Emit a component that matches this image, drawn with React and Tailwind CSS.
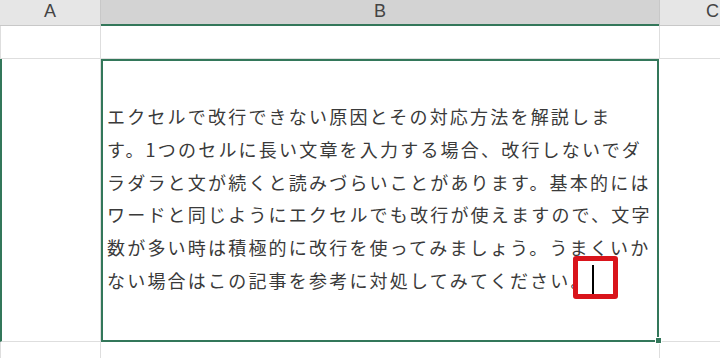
export default function App() {
  const lines = [
    "エクセルで改行できない原因とその対応方法を解説しま",
    "す。1つのセルに長い文章を入力する場合、改行しないでダ",
    "ラダラと文が続くと読みづらいことがあります。基本的には",
    "ワードと同じようにエクセルでも改行が使えますので、文字",
    "数が多い時は積極的に改行を使ってみましょう。うまくいか",
  ]
  const last = "ない場合はこの記事を参考に対処してみてください。"

  return (
    <div className="w-[720px] h-[358px] overflow-hidden bg-white flex flex-col font-['Noto_Sans_CJK_JP',sans-serif]">
      {/* Column headers */}
      <div className="flex h-[26px] shrink-0 font-['Liberation_Sans',sans-serif] text-[18px] text-[#444]">
        <div className="w-[101px] shrink-0 bg-[#e6e6e6] border-r border-b border-[#c8c8c8] flex items-center justify-center pb-[3px]">A</div>
        <div className="w-[558px] shrink-0 bg-[#d3d3d3] border-b-2 border-[#33775a] flex items-center justify-center pb-[2px]">B</div>
        <div className="w-[106px] shrink-0 bg-[#e6e6e6] border-l border-b border-[#c8c8c8] flex items-center justify-center pb-[3px]">C</div>
      </div>

      {/* Row 1 */}
      <div className="flex h-[33px] shrink-0">
        <div className="w-[101px] shrink-0 border-l border-r border-b border-[#dedede]" />
        <div className="w-[558px] shrink-0 border-b border-[#dedede]" />
        <div className="w-[106px] shrink-0 border-l border-b border-[#dedede]" />
      </div>

      {/* Row 2 */}
      <div className="flex h-[283px] shrink-0">
        <div className="w-[101px] shrink-0 border-l-2 border-l-[#33775a] border-r border-b border-[#dedede]" />
        <div className="relative w-[558px] shrink-0 border-2 border-[#33775a] pl-[4px] pt-[39px]">
          <div className="text-[18px] leading-[32.8px] tracking-[2.2px] text-[#3a3a3a] whitespace-nowrap">
            {lines.map((l, i) => (
              <div key={i}>{l}</div>
            ))}
            <div className="flex items-center">
              <span>{last}</span>
              <span className="inline-block w-[2px] h-[31px] bg-black ml-[1px]" />
            </div>
          </div>
          <div className="absolute left-[470px] top-[195px] w-[45px] h-[43px] border-[5px] border-[#d9141b] rounded-[3px]" />
          <div className="absolute -right-[5px] -bottom-[4px] w-[7px] h-[7px] bg-[#33775a] border border-white" />
        </div>
        <div className="w-[106px] shrink-0 border-b border-[#dedede]" />
      </div>

      {/* Row 3 */}
      <div className="flex flex-1">
        <div className="w-[101px] shrink-0 border-l border-r border-[#dedede]" />
        <div className="w-[558px] shrink-0" />
        <div className="w-[106px] shrink-0 border-l border-[#dedede]" />
      </div>
    </div>
  )
}
